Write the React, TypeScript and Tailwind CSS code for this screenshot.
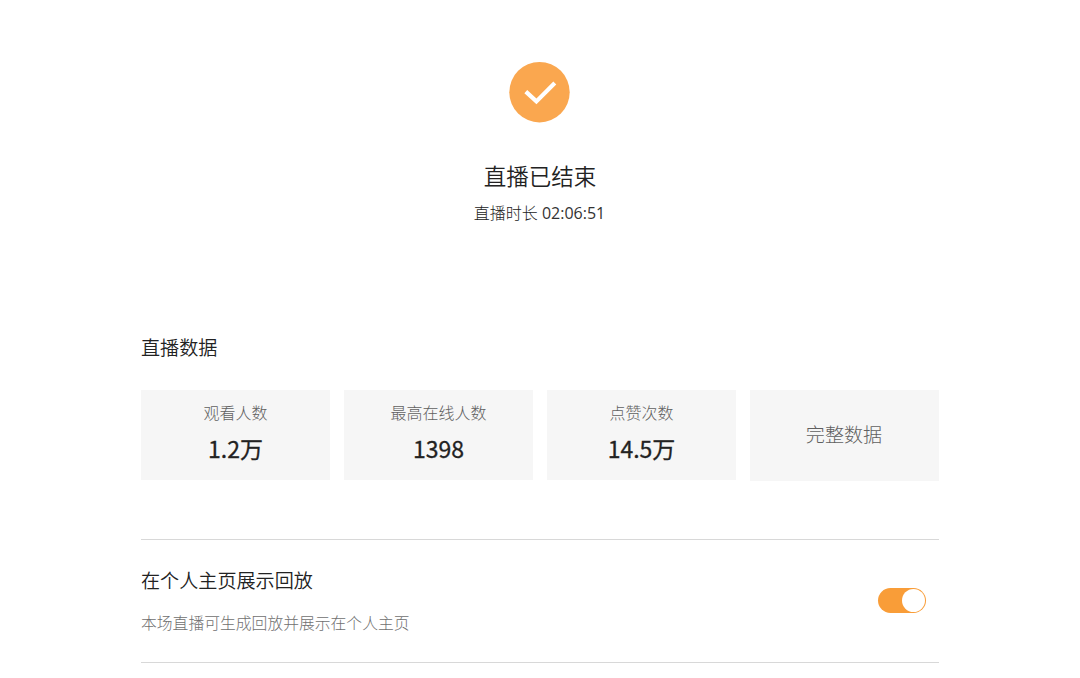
import { useState } from "react";

const stats = [
  { label: "观看人数", value: "1.2万" },
  { label: "最高在线人数", value: "1398" },
  { label: "点赞次数", value: "14.5万" },
];

function DoneIcon() {
  return (
    <svg className="mr-[2px]" width="61" height="61" viewBox="0 0 61 61" fill="none">
      <circle cx="30.5" cy="30.2" r="30.2" fill="#faa74f" />
      <path d="M16.8 29.6L27.4 39.4L45.8 21" stroke="#fff" strokeWidth="4.2" />
    </svg>
  );
}

export default function App() {
  const [showReplay, setShowReplay] = useState(true);

  return (
    <div className="min-h-[678px] bg-white font-['Noto_Sans_CJK_SC',sans-serif] text-[#222]">
      <main className="mx-auto w-[798px]">
        {/* Result header */}
        <header className="flex flex-col items-center pt-[62px]">
          <DoneIcon />
          <h1 className="mt-9 text-[22.5px] leading-8 font-[350]">直播已结束</h1>
          <p className="mt-[9px] mr-px text-base leading-6 font-light whitespace-nowrap">
            直播时长<span className="font-['Open_Sans',sans-serif] font-normal text-[#333]"> 02:06:51</span>
          </p>
        </header>

        {/* Stats */}
        <section className="pt-[106px]">
          <h2 className="text-[19.1px] leading-8 font-[350]">直播数据</h2>
          <div className="mt-[27px] grid grid-cols-4 gap-[14px]">
            {stats.map((stat) => (
              <div key={stat.label} className="flex h-[90px] flex-col items-center bg-[#f6f6f6] pt-[10px]">
                <span className="text-base leading-6 font-light text-[#606060]">{stat.label}</span>
                <span className="mt-2 text-[23px] leading-8 [-webkit-text-stroke:0.3px]">{stat.value}</span>
              </div>
            ))}
            <button className="h-[91px] bg-[#f6f6f6] pr-px pb-[2px] text-[19.1px] font-light text-[#606060]">
              完整数据
            </button>
          </div>
        </section>

        {/* Replay setting */}
        <section className="mt-[58px] flex h-[124px] items-center justify-between border-y border-[#d8d8d8] pb-[2px]">
          <div className="pb-px">
            <h2 className="text-[19.1px] leading-8 font-[350]">在个人主页展示回放</h2>
            <p className="mt-[15px] text-[15.8px] leading-6 font-light text-[#707070]">
              本场直播可生成回放并展示在个人主页
            </p>
          </div>
          <button
            role="switch"
            aria-checked={showReplay}
            aria-label="在个人主页展示回放"
            onClick={() => setShowReplay(!showReplay)}
            className={`mr-[13px] flex h-[25px] w-12 items-center rounded-full p-px ${
              showReplay ? "justify-end bg-[#f99d38]" : "justify-start bg-[#ccc]"
            }`}
          >
            <span className="size-[23px] rounded-full bg-white" />
          </button>
        </section>
      </main>
    </div>
  );
}
